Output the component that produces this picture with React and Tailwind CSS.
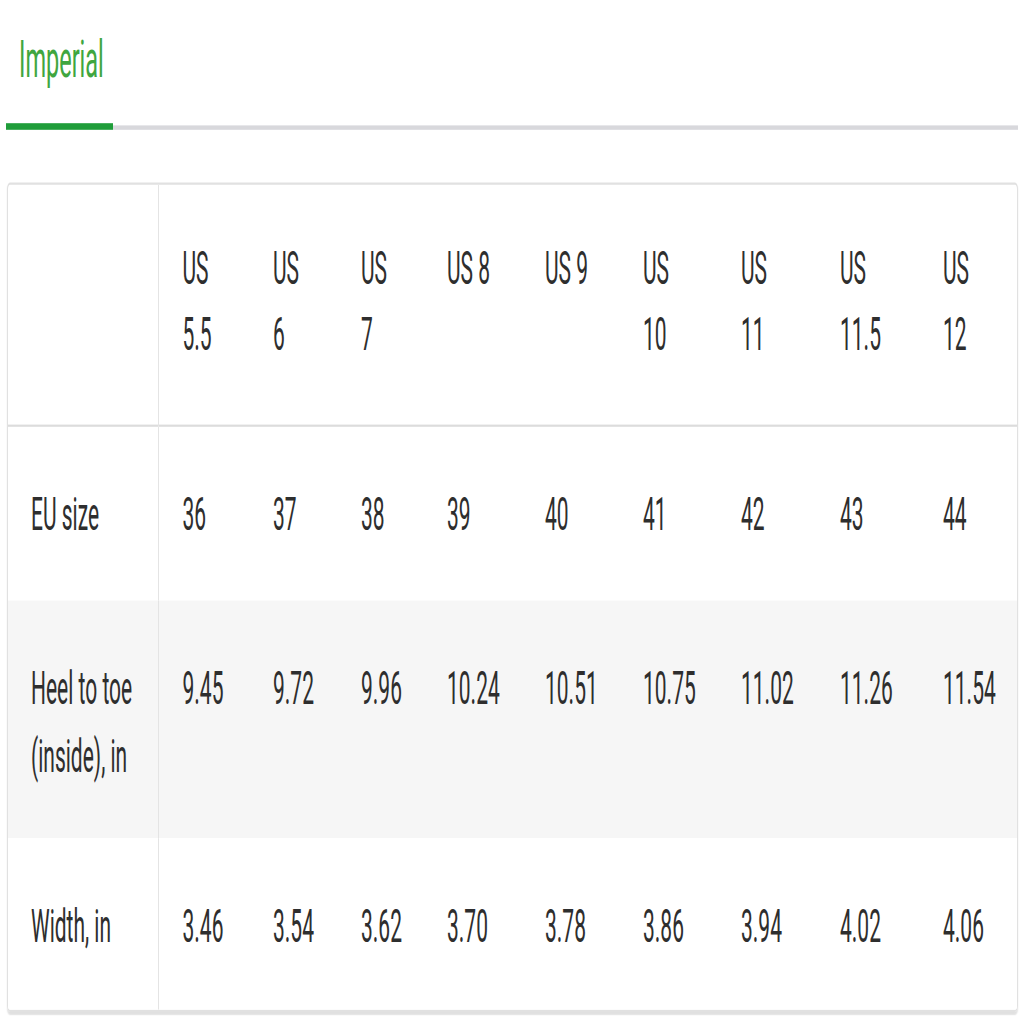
import React from "react";

const SIZES = [
  { us: "US 5.5", eu: "36", heel: "9.45", width: "3.46" },
  { us: "US 6", eu: "37", heel: "9.72", width: "3.54" },
  { us: "US 7", eu: "38", heel: "9.96", width: "3.62" },
  { us: "US 8", eu: "39", heel: "10.24", width: "3.70" },
  { us: "US 9", eu: "40", heel: "10.51", width: "3.78" },
  { us: "US 10", eu: "41", heel: "10.75", width: "3.86" },
  { us: "US 11", eu: "42", heel: "11.02", width: "3.94" },
  { us: "US 11.5", eu: "43", heel: "11.26", width: "4.02" },
  { us: "US 12", eu: "44", heel: "11.54", width: "4.06" },
];

const COLS = [91, 88, 86, 98, 98, 98, 99, 103, 98];

const ROWS = [
  { label: "EU size", key: "eu", bg: "bg-white", pb: "pb-[24px]" },
  { label: "Heel to toe (inside), in", key: "heel", bg: "bg-[#f6f6f6]", pb: "pb-[21.5px]" },
  { label: "Width, in", key: "width", bg: "bg-white", pb: "pb-[23px]" },
];

export default function App() {
  return (
    <div className="w-[1024px] h-[1024px] overflow-hidden bg-white">
      {/* the screenshot is stretched vertically, so the whole sheet is scaled on y */}
      <div className="w-[1024px] h-[465px] origin-top scale-y-[2.2] font-['Roboto',sans-serif] text-[#2e2e2e]">
        {/* Tabs */}
        <div className="flex items-end pl-[6px] pr-[6px]">
          <div className="w-[107px] pl-[13px] pt-[15px] pb-[17px] border-b-[3px] border-[#1f9d3a] text-[23.5px] leading-[24px] text-[#3fa640]">
            Imperial
          </div>
          <div className="flex-1 border-b-2 border-[#d8d8dc]" />
        </div>

        {/* Size table */}
        <div className="ml-[7px] mt-[24px] w-[1011px] border border-[#e1e1e1] rounded-[3px] overflow-hidden shadow-[0_1px_1px_rgba(0,0,0,0.12)]">
          <table className="w-full table-fixed border-collapse text-[21px] leading-[30.5px]">
            <colgroup>
              <col className="w-[150px]" />
              {COLS.map((w, i) => (
                <col key={i} style={{ width: w }} />
              ))}
            </colgroup>
            <thead>
              <tr className="border-b border-[#dcdcdc]">
                <th className="border-r border-[#e4e4e4]" />
                {SIZES.map((s) => (
                  <th key={s.us} className="align-top text-left font-normal pl-[24px] pr-[28px] pt-[22.5px] pb-[25px]">
                    {s.us}
                  </th>
                ))}
              </tr>
            </thead>
            <tbody>
              {ROWS.map((r) => (
                <tr key={r.key} className={r.bg}>
                  <td className={`align-top border-r border-[#e4e4e4] pl-[23px] pr-4 pt-[25px] ${r.pb}`}>
                    {r.label}
                  </td>
                  {SIZES.map((s) => (
                    <td key={s.us} className={`align-top whitespace-nowrap pl-[24px] pt-[25px] ${r.pb}`}>
                      {s[r.key]}
                    </td>
                  ))}
                </tr>
              ))}
            </tbody>
          </table>
        </div>
      </div>
    </div>
  );
}
